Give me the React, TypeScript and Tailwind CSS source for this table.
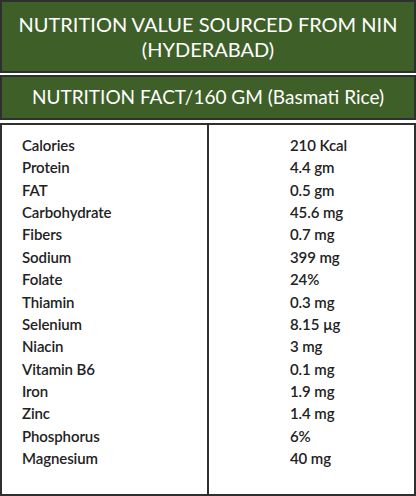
const rows: [string, string][] = [
  ['Calories', '210 Kcal'],
  ['Protein', '4.4 gm'],
  ['FAT', '0.5 gm'],
  ['Carbohydrate', '45.6 mg'],
  ['Fibers', '0.7 mg'],
  ['Sodium', '399 mg'],
  ['Folate', '24%'],
  ['Thiamin', '0.3 mg'],
  ['Selenium', '8.15 µg'],
  ['Niacin', '3 mg'],
  ['Vitamin B6', '0.1 mg'],
  ['Iron', '1.9 mg'],
  ['Zinc', '1.4 mg'],
  ['Phosphorus', '6%'],
  ['Magnesium', '40 mg'],
];

export default function App() {
  return (
    <div className="w-[416px] h-[496px] bg-white font-['Lato','Liberation_Sans',sans-serif] flex flex-col gap-[2px]">
      <div className="h-[73px] bg-[#3e5f28] border-2 border-[#2f2f2f] flex flex-col items-center justify-center text-white text-[20px] leading-[25px] text-center">
        <div>NUTRITION VALUE SOURCED FROM NIN</div>
        <div>(HYDERABAD)</div>
      </div>
      <div className="h-[45px] bg-[#3e5f28] border-2 border-[#2f2f2f] flex items-center justify-center text-white text-[19px]">
        NUTRITION FACT/160 GM (Basmati Rice)
      </div>
      <div className="flex-1 mt-[1px] border-2 border-[#2f2f2f] flex text-[15px] text-[#222] font-semibold leading-[22.36px] tracking-[-0.1px]">
        <div className="w-[207px] border-r-2 border-[#2f2f2f] pl-[20px] pt-[9px]">
          {rows.map(([k]) => (
            <div key={k}>{k}</div>
          ))}
        </div>
        <div className="flex-1 pl-[81px] pt-[9px]">
          {rows.map(([k, v]) => (
            <div key={k}>{v}</div>
          ))}
        </div>
      </div>
    </div>
  );
}
